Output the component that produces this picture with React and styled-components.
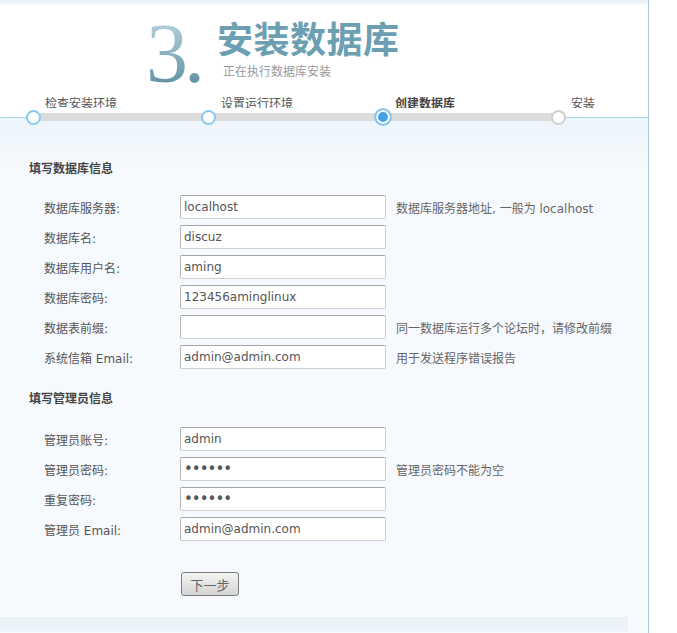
import React from "react";
import styled, { createGlobalStyle } from "styled-components";

const GlobalStyle = createGlobalStyle`
  html, body {
    margin: 0;
    padding: 0;
    background: #fff;
  }
  body {
    font-family: "DejaVu Sans", "Noto Sans CJK SC", sans-serif;
    font-size: 12px;
    color: #555;
  }
`;

const Page = styled.div`
  width: 648px;
  min-height: 633px;
  border-right: 1px solid #a9cad8;
  display: flex;
  flex-direction: column;
  background: #f6f9fd;
`;

const TopStrip = styled.div`
  height: 5px;
  background: linear-gradient(#e6f0f7, #f6fafc);
`;

const Header = styled.div`
  background: #fff;
  padding-top: 13px;
`;

const TitleBlock = styled.div`
  display: flex;
  align-items: flex-start;
  padding-left: 146px;
  height: 72px;
`;

const BigNumber = styled.div`
  font-family: "Liberation Serif", serif;
  font-size: 84px;
  line-height: 72px;
  background: linear-gradient(#b6d4df, #5d8e9f);
  -webkit-background-clip: text;
  background-clip: text;
  color: transparent;
  letter-spacing: -4px;
`;

const TitleText = styled.div`
  display: flex;
  flex-direction: column;
  margin-left: 16px;
`;

const MainTitle = styled.h1`
  margin: 0;
  font-family: "Noto Sans CJK SC", sans-serif;
  font-size: 36px;
  line-height: 38px;
  font-weight: 700;
  color: #6b9fb1;
  letter-spacing: 0.5px;
`;

const SubTitle = styled.div`
  margin-left: 6px;
  margin-top: 8px;
  font-family: "Noto Sans CJK SC", sans-serif;
  font-size: 12px;
  line-height: 14px;
  color: #999;
`;

const StepLabels = styled.div`
  display: grid;
  grid-template-columns: repeat(3, 175px) 1fr;
  padding-left: 45px;
  height: 18px;
  align-items: end;
`;

const StepLabel = styled.span`
  font-family: "Noto Sans CJK SC", sans-serif;
  font-size: 12px;
  line-height: 10px;
  color: ${(p) => (p.$active ? "#444" : "#555")};
  font-weight: ${(p) => (p.$active ? 700 : 400)};
  margin-left: ${(p) => p.$shift || 0}px;
`;

const Track = styled.div`
  display: grid;
  grid-template-columns: repeat(3, 175px) 1fr;
  padding-left: 26px;
  height: 18px;
  align-items: center;
  background:
    linear-gradient(#dcdcdc, #dcdcdc) no-repeat 33px 50% / 525px 8px,
    linear-gradient(#a6d0e4, #a6d0e4) no-repeat 0 9px / 100% 1px,
    linear-gradient(#fff 9px, #eef6fb 9px);
`;

const Dot = styled.span`
  box-sizing: border-box;
  width: ${(p) => (p.$active ? 18 : 15)}px;
  height: ${(p) => (p.$active ? 18 : 15)}px;
  margin-left: ${(p) => (p.$active ? -2 : 0)}px;
  border-radius: 50%;
  border: 2px solid ${(p) => (p.$done || p.$active ? "#86c9f1" : "#cfcfcf")};
  background: ${(p) => (p.$active ? "#45a3e5" : "#fff")};
  box-shadow: ${(p) => (p.$active ? "inset 0 0 0 2px #fff" : "none")};
`;

const Content = styled.div`
  flex: 1;
  padding: 32px 0 0 29px;
  background: linear-gradient(#eef6fb, #f6f9fd 40px);
  display: flex;
  flex-direction: column;
`;

const SectionTitle = styled.h3`
  margin: 0;
  font-family: "Noto Sans CJK SC", sans-serif;
  font-size: 12px;
  line-height: 20px;
  font-weight: 700;
  color: #444;
`;

const Rows = styled.div`
  display: flex;
  flex-direction: column;
  padding-left: 15px;
  margin: ${(p) => p.$top}px 0 16px;
`;

const Row = styled.div`
  display: grid;
  grid-template-columns: 136px 206px auto;
  align-items: center;
  height: 30px;
`;

const Label = styled.label`
  color: #555;
  font-size: 12px;
`;

const Field = styled.input`
  box-sizing: border-box;
  width: 206px;
  height: 24px;
  padding: 0 3px;
  border: 1px solid #cfcfcf;
  border-top-color: #a4a4a4;
  border-left-color: #b8b8b8;
  border-radius: 2px;
  background: #fff;
  font-family: "DejaVu Sans", sans-serif;
  font-size: ${(p) => (p.type === "password" ? 15 : 12)}px;
  letter-spacing: ${(p) => (p.type === "password" ? "-1px" : "0")};
  color: #555;
  outline: none;
`;

const Hint = styled.span`
  margin-left: 10px;
  color: #666;
  font-size: 12px;
  white-space: nowrap;
`;

const Actions = styled.div`
  padding-left: 152px;
  margin-top: 12px;
  margin-bottom: 21px;
`;

const NextButton = styled.button`
  width: 58px;
  height: 24px;
  border: 1px solid #7d7d7d;
  border-radius: 3px;
  background: linear-gradient(#f4f4f4, #d4d4d4);
  font-family: "Noto Sans CJK SC", sans-serif;
  font-size: 13px;
  color: #666;
  padding: 0;
`;

const Footer = styled.div`
  height: 15px;
  width: 628px;
  margin-left: -29px;
  background: linear-gradient(#e6f1f9, #eef5fb);
`;

const steps = [
  { label: "检查安装环境", done: true },
  { label: "设置运行环境", done: true, shift: 1 },
  { label: "创建数据库", active: true },
  { label: "安装", shift: 1 },
];

const dbFields = [
  { label: "数据库服务器:", value: "localhost", hint: "数据库服务器地址, 一般为 localhost" },
  { label: "数据库名:", value: "discuz" },
  { label: "数据库用户名:", value: "aming" },
  { label: "数据库密码:", value: "123456aminglinux" },
  { label: "数据表前缀:", value: "", hint: "同一数据库运行多个论坛时，请修改前缀" },
  { label: "系统信箱 Email:", value: "admin@admin.com", hint: "用于发送程序错误报告" },
];

const adminFields = [
  { label: "管理员账号:", value: "admin" },
  { label: "管理员密码:", value: "123456", type: "password", hint: "管理员密码不能为空" },
  { label: "重复密码:", value: "123456", type: "password" },
  { label: "管理员 Email:", value: "admin@admin.com" },
];

const FieldRows = ({ fields, top }) => (
  <Rows $top={top}>
    {fields.map((f, i) => (
      <Row key={i}>
        <Label>{f.label}</Label>
        <Field type={f.type || "text"} defaultValue={f.value} readOnly />
        {f.hint ? <Hint>{f.hint}</Hint> : <span />}
      </Row>
    ))}
  </Rows>
);

export default function App() {
  return (
    <>
      <GlobalStyle />
      <Page>
        <TopStrip />
        <Header>
          <TitleBlock>
            <BigNumber>3.</BigNumber>
            <TitleText>
              <MainTitle>安装数据库</MainTitle>
              <SubTitle>正在执行数据库安装</SubTitle>
            </TitleText>
          </TitleBlock>
          <StepLabels>
            {steps.map((s, i) => (
              <StepLabel key={i} $active={s.active} $shift={s.shift}>
                {s.label}
              </StepLabel>
            ))}
          </StepLabels>
        </Header>
        <Track>
          {steps.map((s, i) => (
            <Dot key={i} $done={s.done} $active={s.active} />
          ))}
        </Track>
        <Content>
          <SectionTitle>填写数据库信息</SectionTitle>
          <FieldRows fields={dbFields} top={14} />
          <SectionTitle>填写管理员信息</SectionTitle>
          <FieldRows fields={adminFields} top={16} />
          <Actions>
            <NextButton>下一步</NextButton>
          </Actions>
          <Footer />
        </Content>
      </Page>
    </>
  );
}
